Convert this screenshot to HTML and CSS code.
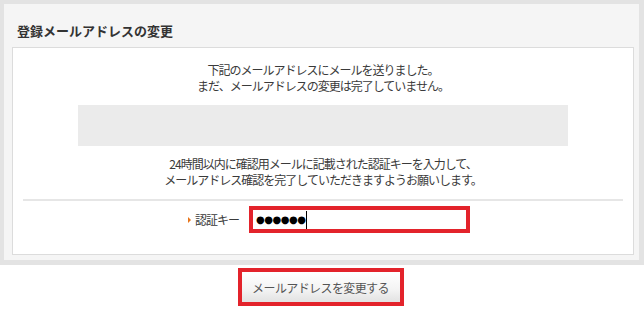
FILE: index.html
```html
<!DOCTYPE html>
<html lang="ja">
<head>
<meta charset="utf-8">
<link rel="stylesheet" href="styles.css">
</head>
<body>
<div class="box">
  <h2 class="title">登録メールアドレスの変更</h2>
  <div class="panel">
    <p class="msg">下記のメールアドレスにメールを送りました。<br>まだ、メールアドレスの変更は完了していません。</p>
    <div class="addr"></div>
    <p class="msg msg2">24時間以内に確認用メールに記載された認証キーを入力して、<br>メールアドレス確認を完了していただきますようお願いします。</p>
    <hr class="divider">
    <div class="row">
      <span class="label"><span class="arrow"></span>認証キー</span>
      <div class="keybox"><span class="dots">●●●●●●</span><span class="caret"></span></div>
    </div>
  </div>
</div>
<div class="actions">
  <button class="submit" type="button">メールアドレスを変更する</button>
</div>
</body>
</html>
```
FILE: styles.css
```css
html, body {
  margin: 0;
  padding: 0;
  background: #ffffff;
  font-family: "Noto Sans CJK JP", "Noto Sans", sans-serif;
  color: #333333;
}

.box {
  border: 4px solid #e3e3e3;
  border-right-width: 5px;
  border-bottom-width: 5px;
  background: #f5f5f5;
  padding: 0 5px 5px 8px;
  box-sizing: content-box;
  width: 622px;
}

.title {
  margin: 0;
  padding: 17px 0 6px 5px;
  font-size: 13px;
  line-height: 20px;
  font-weight: bold;
  color: #333333;
}

.panel {
  background: #ffffff;
  border: 1px solid #dcdcdc;
  padding: 14px 10px 22px 10px;
  height: 208px;
  box-sizing: border-box;
}

.msg {
  margin: 0;
  text-align: center;
  font-size: 12px;
  line-height: 16px;
  letter-spacing: -1px;
  color: #3a3a3a;
}

.addr {
  width: 490px;
  height: 41px;
  margin: 11px auto 0;
  background: #ebebeb;
}

.msg2 {
  margin-top: 10px;
}

.divider {
  margin: 11px 0 0 0;
  border: 0;
  height: 2px;
  background: #e6e6e6;
}

.row {
  display: flex;
  align-items: center;
  margin-top: 5px;
  padding-left: 165px;
}

.label {
  display: flex;
  align-items: center;
  font-size: 12px;
  letter-spacing: -1px;
  color: #3a3a3a;
  width: 61px;
}

.arrow {
  width: 0;
  height: 0;
  border-left: 3px solid #e8751a;
  border-top: 3px solid transparent;
  border-bottom: 3px solid transparent;
  margin-right: 4px;
}

.keybox {
  width: 221px;
  height: 27px;
  box-sizing: border-box;
  border: 4px solid #e3232b;
  background: #ffffff;
  display: flex;
  align-items: center;
  padding-left: 3px;
}

.dots {
  font-family: "DejaVu Sans", sans-serif;
  font-size: 10px;
  letter-spacing: -0.5px;
  color: #000000;
  line-height: 1;
}

.caret {
  width: 1px;
  height: 18px;
  background: #000000;
  margin-left: 1px;
}

.actions {
  display: flex;
  justify-content: center;
  padding-top: 3px;
  padding-right: 3px;
}

.submit {
  width: 166px;
  height: 38px;
  box-sizing: border-box;
  border: 4px solid #e3232b;
  background: linear-gradient(#ffffff, #f3f3f3 60%, #e2e2e2);
  font-family: "Noto Sans CJK JP", "Noto Sans", sans-serif;
  font-size: 12px;
  letter-spacing: -0.6px;
  color: #555555;
  padding: 0;
  cursor: pointer;
}
```
